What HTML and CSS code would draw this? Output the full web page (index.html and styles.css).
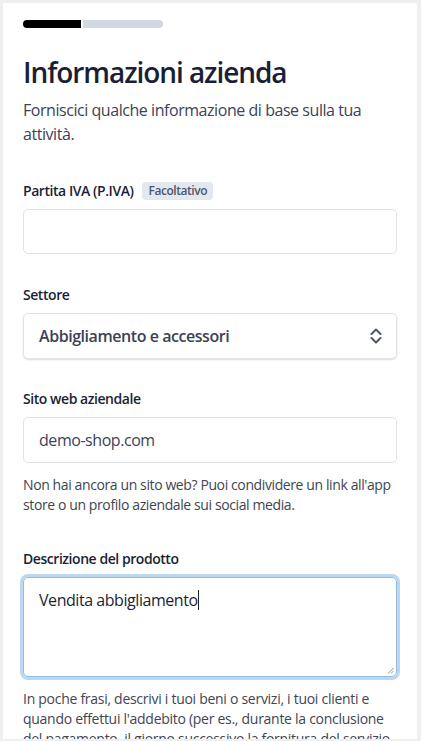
FILE: index.html
```html
<!DOCTYPE html>
<html lang="it">
<head>
<meta charset="utf-8">
<title>Informazioni azienda</title>
<link rel="stylesheet" href="styles.css">
</head>
<body>
<div class="card">
  <div class="progress"><span class="done"></span><span class="todo"></span></div>
  <h1 class="title">Informazioni azienda</h1>
  <p class="lead">Forniscici qualche informazione di base sulla tua attività.</p>

  <div class="field first">
    <div class="label">Partita IVA (P.IVA) <span class="badge">Facoltativo</span></div>
    <input class="input input-vat" type="text" value="">
  </div>

  <div class="field">
    <div class="label">Settore</div>
    <div class="select">
      <span class="select-text">Abbigliamento e accessori</span>
      <svg class="chev" width="12" height="18" viewBox="0 0 12 18" aria-hidden="true">
        <polyline points="1.5,7 6,2.5 10.5,7" fill="none" stroke="#4f566b" stroke-width="2" stroke-linecap="round" stroke-linejoin="round"/>
        <polyline points="1.5,11 6,15.5 10.5,11" fill="none" stroke="#4f566b" stroke-width="2" stroke-linecap="round" stroke-linejoin="round"/>
      </svg>
    </div>
  </div>

  <div class="field site">
    <div class="label">Sito web aziendale</div>
    <input class="input" type="text" value="demo-shop.com">
    <p class="help help-site">Non hai ancora un sito web? Puoi condividere un link all'app store o un profilo aziendale sui social media.</p>
  </div>

  <div class="field desc">
    <div class="label">Descrizione del prodotto</div>
    <div class="textarea">
      <span class="ta-text">Vendita abbigliamento</span><span class="caret"></span>
      <svg class="grip" width="7" height="7" viewBox="0 0 7 7" aria-hidden="true">
        <line x1="6.5" y1="1" x2="1" y2="6.5" stroke="#8a8f99" stroke-width="1"/>
        <line x1="6.5" y1="4" x2="4" y2="6.5" stroke="#8a8f99" stroke-width="1"/>
      </svg>
    </div>
    <p class="help help-desc">In poche frasi, descrivi i tuoi beni o servizi, i tuoi clienti e quando effettui l'addebito (per es., durante la conclusione del pagamento, il giorno successivo la fornitura del servizio o su base mensile).</p>
  </div>
</div>
</body>
</html>
```

FILE: styles.css
```css
html, body {
  margin: 0;
  padding: 0;
}
body {
  background: #efefef;
  font-family: "Open Sans", "Noto Sans", "DejaVu Sans", sans-serif;
  color: #1a1f36;
  letter-spacing: -0.028em;
}
.card {
  box-sizing: border-box;
  margin: 3px 4px 0 3px;
  height: 736px;
  overflow: hidden;
  background: #ffffff;
  padding: 17px 20px 0 20px;
}
.progress {
  display: flex;
  gap: 2px;
  height: 8px;
}
.progress .done {
  width: 58px;
  background: #000000;
  border-radius: 4px 0 0 4px;
}
.progress .todo {
  width: 80px;
  background: #d1d8e0;
  border-radius: 0 4px 4px 0;
}
.title {
  margin: 26px 0 0 0;
  font-size: 28px;
  line-height: 36px;
  font-weight: 600;
  letter-spacing: -0.038em;
  color: #1a1f36;
}
.lead {
  margin: 8px 0 0 0;
  font-size: 16px;
  line-height: 24px;
  color: #3c4257;
}
.field {
  margin-top: 31px;
}
.field.first {
  margin-top: 35px;
}
.field.site {
  margin-top: 30px;
}
.field.desc {
  margin-top: 34px;
}
.label {
  display: flex;
  align-items: center;
  gap: 9px;
  font-size: 14px;
  line-height: 20px;
  font-weight: 600;
  color: #1a1f36;
}
.badge {
  font-size: 12px;
  line-height: 18px;
  font-weight: 600;
  padding: 0 6px;
  border-radius: 4px;
  background: #e3e8ee;
  color: #4f566b;
}
.input {
  display: block;
  box-sizing: border-box;
  width: 100%;
  height: 46px;
  margin: 8px 0 0 0;
  padding: 0 15px;
  border: 1px solid #e0e3e8;
  border-radius: 5px;
  background: #fff;
  font-family: inherit;
  font-size: 16px;
  letter-spacing: -0.028em;
  color: #3c4257;
  outline: none;
}
.input-vat {
  height: 45px;
}
.select {
  box-sizing: border-box;
  height: 46px;
  margin-top: 8px;
  padding: 0 14px 0 15px;
  display: flex;
  align-items: center;
  justify-content: space-between;
  border: 1px solid #e0e3e8;
  border-radius: 5px;
  box-shadow: 0 1px 2px rgba(60, 66, 87, 0.14), 0 1px 1px rgba(0, 0, 0, 0.04);
}
.select-text {
  font-size: 16px;
  font-weight: 600;
  color: #3c4257;
}
.chev {
  display: block;
}
.help {
  margin: 12px 0 0 0;
  font-size: 14px;
  line-height: 20px;
  color: #414552;
}
.help-site {
  letter-spacing: -0.028em;
}
.textarea {
  position: relative;
  box-sizing: border-box;
  height: 100px;
  margin-top: 8px;
  padding: 10px 15px;
  border: 1px solid #8fbde6;
  border-radius: 5px;
  box-shadow: 0 0 0 3px #bcd8f1;
  font-size: 16px;
  line-height: 24px;
  color: #1a1f36;
}
.caret {
  display: inline-block;
  width: 1px;
  height: 20px;
  background: #1a1f36;
  vertical-align: -4px;
}
.grip {
  position: absolute;
  right: 2px;
  bottom: 2px;
}
.help-desc {
  margin-top: 12px;
  letter-spacing: -0.02em;
}
```
